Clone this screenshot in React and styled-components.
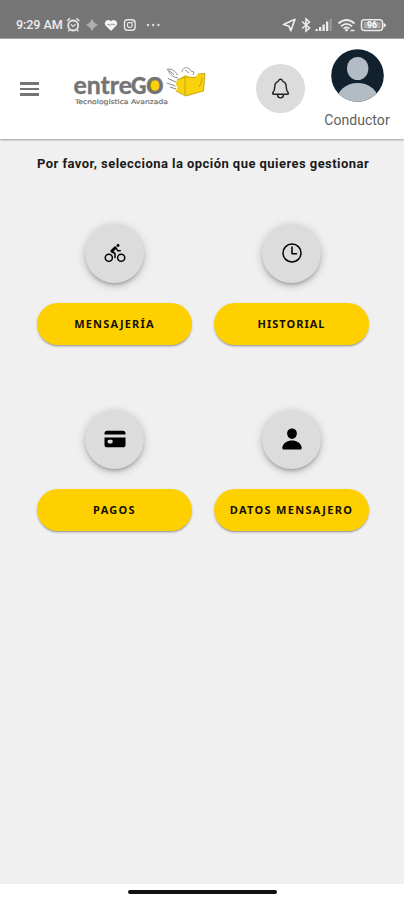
import styled, { createGlobalStyle } from "styled-components"
import { IoNotificationsOutline, IoBicycle, IoTimeOutline, IoCard, IoPerson } from "react-icons/io5"

const GlobalStyle = createGlobalStyle`
    * {
        box-sizing: border-box;
    }
    body {
        margin: 0;
        background: #fff;
        font-family: Roboto, sans-serif;
    }
`

const Screen = styled.div`
    width: 404px;
    height: 900px;
    display: flex;
    flex-direction: column;
    overflow: hidden;
`

const StatusBar = styled.div`
    height: 39px;
    flex: none;
    background: #757575;
    border-bottom: 1px solid #a6a6a6;
    padding: 11px 16px 0 16px;
    display: flex;
    justify-content: space-between;
    color: #ececec;
`

const StatusGroup = styled.div`
    height: 27px;
    display: flex;
    align-items: center;
    svg {
        display: block;
    }
`

const Clock = styled.span`
    width: 50px;
    font-size: 12.6px;
    font-weight: 500;
    letter-spacing: -0.1px;
    white-space: nowrap;
`

const Header = styled.header`
    height: 100px;
    flex: none;
    background: #fff;
    display: flex;
    align-items: flex-start;
    box-shadow: 0 1px 2px rgba(0,0,0,0.35);
    z-index: 1;
`

const MenuButton = styled.div`
    width: 19px;
    height: 14px;
    margin: 43px 0 0 20px;
    display: flex;
    flex-direction: column;
    justify-content: space-between;
`

const MenuLine = styled.span`
    height: 2.6px;
    background: #757575;
`

const LogoWrapper = styled.div`
    margin: 25px 0 0 34px;
    svg {
        display: block;
    }
`

const BellButton = styled.div`
    width: 49px;
    height: 49px;
    margin: 25px 0 0 47px;
    border-radius: 50%;
    background: #dcdcdc;
    color: #222;
    display: flex;
    align-items: center;
    justify-content: center;
    font-size: 23px;
    padding-bottom: 1px;
`

const Profile = styled.div`
    width: 72px;
    margin: 10px 0 0 16px;
    display: flex;
    flex-direction: column;
    align-items: center;
    svg {
        display: block;
    }
`

const ProfileName = styled.span`
    margin-top: 9px;
    font-size: 14px;
    line-height: 18px;
    letter-spacing: 0.05px;
    color: #606060;
`

const Content = styled.main`
    flex: 1;
    background: #f0f0f0;
    padding: 16px 35px 0 37px;
`

const Prompt = styled.h1`
    margin: 0;
    height: 18px;
    font-size: 13px;
    line-height: 18px;
    font-weight: 700;
    letter-spacing: 0.45px;
    color: #1a1a1a;
    white-space: nowrap;
`

const Options = styled.div`
    margin-top: 50.5px;
    display: grid;
    grid-template-columns: 155px 155px;
    column-gap: 22px;
    row-gap: 65px;
`

const OptionWrapper = styled.div`
    display: flex;
    flex-direction: column;
    align-items: center;
`

const OptionIcon = styled.div`
    width: 59px;
    height: 59px;
    border-radius: 50%;
    background: #dcdcdc;
    box-shadow: 0 3px 4px -2px rgba(0,0,0,0.3), 0 2px 10px rgba(0,0,0,0.22);
    display: flex;
    align-items: center;
    justify-content: center;
    font-size: 24px;
    color: #000;
`

const OptionButton = styled.button`
    width: 155px;
    height: 42px;
    margin-top: 20px;
    padding: 0 0 1px;
    border: none;
    border-radius: 21px;
    background: #ffd000;
    box-shadow: 0 2px 2px -1px rgba(0,0,0,0.3), 0 1px 3px rgba(0,0,0,0.15);
    font-family: "Noto Sans", sans-serif;
    font-size: 11px;
    font-weight: 700;
    letter-spacing: ${props => props.$spacing};
    text-transform: uppercase;
    color: #151000;
    white-space: nowrap;
`

const Footer = styled.footer`
    height: 16px;
    flex: none;
    background: #fff;
    display: flex;
    justify-content: center;
    padding-top: 6px;
`

const HomeBar = styled.div`
    width: 149px;
    height: 4px;
    border-radius: 2px;
    background: #111;
`

const options = [
    { label: "Mensajería", icon: <IoBicycle />, spacing: "1.2px" },
    { label: "Historial", icon: <IoTimeOutline />, spacing: "1px" },
    { label: "Pagos", icon: <IoCard />, spacing: "1.3px" },
    { label: "Datos mensajero", icon: <IoPerson />, spacing: "1.3px" },
]

const LeftIcons = () => (
    <svg width="96" height="16" viewBox="0 0 96 16" fill="none" stroke="#e6e6e6">
        <circle cx="7.2" cy="8.5" r="5" strokeWidth="1.8" />
        <path d="M1 4l3-2.6M13.4 4l-3-2.6M3.5 13l-1.3 1.3M11 13l1.3 1.3" strokeWidth="1.5" />
        <path d="M5 7.5l2 2 2.8-2.4" strokeWidth="1.2" />
        <path d="M26 3l5 5-5 5-5-5z" fill="#b0b0b0" stroke="none" />
        <path d="M26 2.5v11M20.5 8h11" stroke="#b0b0b0" strokeWidth="1.5" />
        <path d="M45 14l-5.2-5.2C36.7 5.7 41.5 0.7 45 4.2C48.5 0.7 53.3 5.7 50.2 8.8z" fill="#f4f4f4" stroke="none" />
        <path d="M41.5 7.5h2l1 1.2 1.3-2 1 .8h2" stroke="#999" strokeWidth="1" />
        <rect x="58.5" y="2.7" width="10.6" height="10.6" rx="3" strokeWidth="1.4" />
        <rect x="61.5" y="5.7" width="4.6" height="4.6" rx="1.5" strokeWidth="1.2" />
        <circle cx="66.8" cy="4.9" r=".5" strokeWidth=".7" />
        <g fill="#dedede" stroke="none">
            <circle cx="82" cy="8" r="1.2" />
            <circle cx="87.2" cy="8" r="1.2" />
            <circle cx="92.4" cy="8" r="1.2" />
        </g>
    </svg>
)

const RightIcons = () => (
    <svg width="106" height="16" viewBox="0 0 106 16" fill="none" stroke="#ececec">
        <path d="M1.5 7.5L13 2.3 8.8 13.8 7 9.3z" strokeWidth="1.7" strokeLinejoin="round" />
        <path d="M20 4.5l7.5 6.500-3.500 3V2l3.500 3-7.500 6.500" strokeWidth="1.6" />
        <g fill="#ececec" stroke="none">
            <rect x="33.500" y="12" width="2.300" height="2" />
            <rect x="37" y="10" width="2.300" height="4" />
            <rect x="40.500" y="7.500" width="2.300" height="6.500" />
            <rect x="44" y="4.500" width="2.300" height="9.500" />
            <rect x="47.500" y="2" width="2.300" height="12" fill="#9a9a9a" />
        </g>
        <path d="M56.500 6.500q8-7 16 0M59 9.200q5.500-4.700 11 0M61.500 11.600q3-2.500 6 0" strokeWidth="1.800" />
        <circle cx="64.500" cy="13" r="1.400" fill="#ececec" stroke="none" />
        <path d="M68.500 13.500h4" strokeWidth="1.500" />
        <rect x="79.500" y="2.800" width="21" height="10.800" rx="3" strokeWidth="1.500" />
        <path d="M101.500 5.500l3 2.700-3 2.700z" fill="#ececec" stroke="none" />
        <rect x="81.500" y="4.800" width="17" height="6.800" rx="1.500" fill="#a6a6a6" stroke="none" />
        <text x="90" y="11.200" textAnchor="middle" fontFamily="Roboto, sans-serif" fontSize="8.500" fontWeight="700" fill="#fff" stroke="none">96</text>
    </svg>
)

const Logo = () => (
    <svg width="136" height="44" viewBox="0 0 136 44">
        <circle cx="81.500" cy="21.500" r="6" fill="#ffd000" />
        <g fontFamily="Lato, sans-serif" fill="#747474">
            <text x="0.500" y="29.500" fontSize="24.500" fontWeight="700" stroke="#747474" strokeWidth=".4" textLength="58.500" lengthAdjust="spacingAndGlyphs">entre</text>
            <text x="58" y="29.500" fontSize="22" fontWeight="900" stroke="#747474" strokeWidth=".5" textLength="32.500" lengthAdjust="spacingAndGlyphs">GO</text>
        </g>
        <text x="2" y="40" fontFamily="DejaVu Sans, sans-serif" fontSize="6.500" fill="#696969" stroke="#696969" strokeWidth=".15" textLength="93" lengthAdjust="spacingAndGlyphs">Tecnologística Avanzada</text>
        <g fill="none" stroke="#888" strokeWidth="1">
            <path d="M105 14C99 13 96 9 94.500 5c5 0 8 2 10 6M96 6.500l5 4M95 14.500l9 4M93.500 19l9 3M97 23l6 2" />
            <path d="M109 8c0-5 7-6 9-1l3 1-1 3M112 6l4 3" stroke="#999" />
        </g>
        <path d="M104 16l8-5 5 2 5 0 3-3 7-.5-1.500 17.500-17.500 5-10-5.500 1.500-3-1.500-3z" fill="#f8d20a" />
        <path d="M112 12v19M113 13l10 .5M129 14l-1 5-2 4M104 16l8-3M103 27l9.500 5 18-5 1.500-17.500-7 .5" fill="none" stroke="#b59a18" strokeWidth=".8" />
    </svg>
)

const Avatar = () => (
    <svg width="53" height="53" viewBox="0 0 53 53">
        <defs>
            <clipPath id="avatarClip"><circle cx="26.500" cy="26.500" r="26.300" /></clipPath>
        </defs>
        <g clipPath="url(#avatarClip)">
            <rect width="53" height="53" fill="#12212e" />
            <ellipse cx="26.700" cy="19.500" rx="10.700" ry="11.600" fill="#b3bbc5" />
            <ellipse cx="26.700" cy="52" rx="21" ry="18" fill="#b3bbc5" />
        </g>
    </svg>
)

const Option = ({ label, icon, spacing }) => (
    <OptionWrapper>
        <OptionIcon>{icon}</OptionIcon>
        <OptionButton $spacing={spacing}>{label}</OptionButton>
    </OptionWrapper>
)

const App = () => {
    return (
        <>
            <GlobalStyle />
            <Screen>
                <StatusBar>
                    <StatusGroup>
                        <Clock>9:29 AM</Clock>
                        <LeftIcons />
                    </StatusGroup>
                    <StatusGroup>
                        <RightIcons />
                    </StatusGroup>
                </StatusBar>
                <Header>
                    <MenuButton>
                        <MenuLine />
                        <MenuLine />
                        <MenuLine />
                    </MenuButton>
                    <LogoWrapper>
                        <Logo />
                    </LogoWrapper>
                    <BellButton>
                        <IoNotificationsOutline />
                    </BellButton>
                    <Profile>
                        <Avatar />
                        <ProfileName>Conductor</ProfileName>
                    </Profile>
                </Header>
                <Content>
                    <Prompt>Por favor, selecciona la opción que quieres gestionar</Prompt>
                    <Options>
                        {options.map(option => (
                            <Option key={option.label} {...option} />
                        ))}
                    </Options>
                </Content>
                <Footer>
                    <HomeBar />
                </Footer>
            </Screen>
        </>
    )
}

export default App
